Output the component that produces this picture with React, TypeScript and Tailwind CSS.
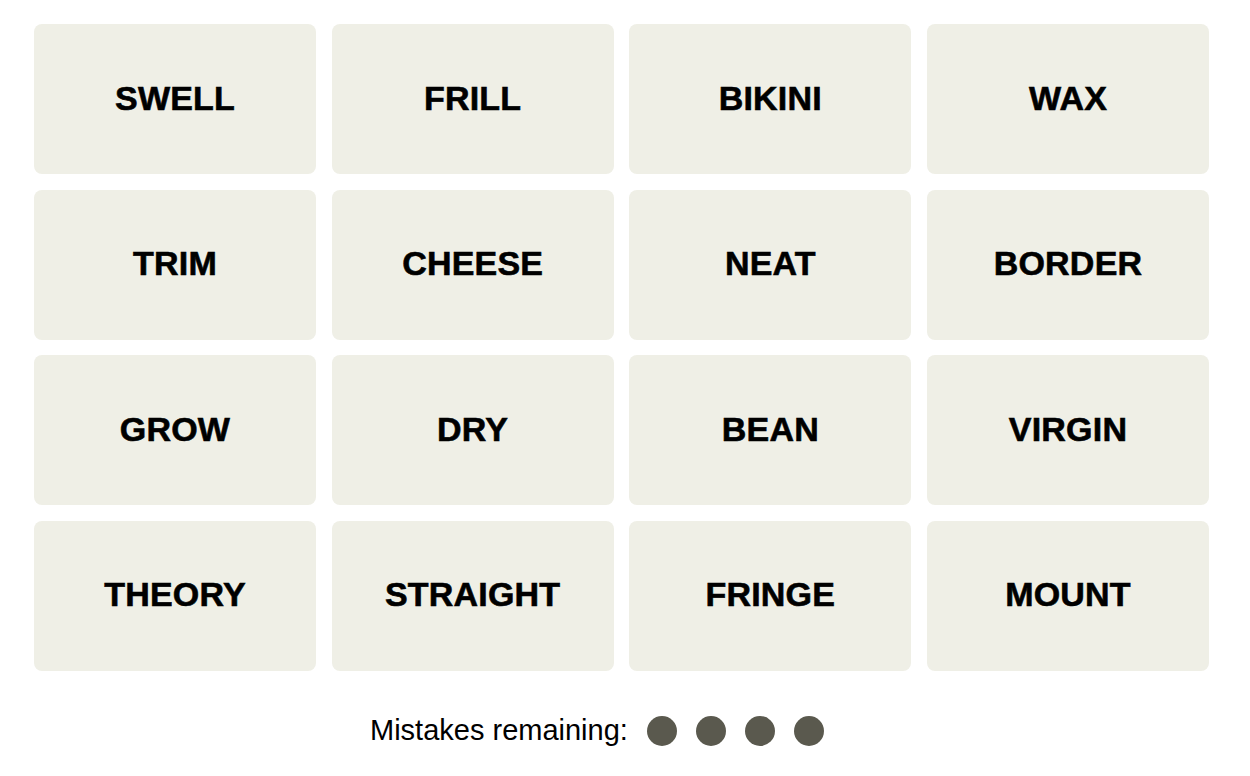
import React from 'react';

const words = [
  'SWELL', 'FRILL', 'BIKINI', 'WAX',
  'TRIM', 'CHEESE', 'NEAT', 'BORDER',
  'GROW', 'DRY', 'BEAN', 'VIRGIN',
  'THEORY', 'STRAIGHT', 'FRINGE', 'MOUNT',
];

const App: React.FC = () => {
  return (
    <div className="min-h-screen bg-white pt-[24px] font-['Liberation_Sans',Arial,sans-serif] text-black">
      <div className="ml-[34px] w-[1175px] grid grid-cols-4 gap-x-[15.67px] gap-y-[15.67px]">
        {words.map((w) => (
          <div
            key={w}
            className="h-[150px] rounded-[8px] bg-[#efefe6] flex items-center justify-center pb-[2px] text-[34px] font-bold tracking-[0.2px] [-webkit-text-stroke:0.6px_black]"
          >
            {w}
          </div>
        ))}
      </div>

      <div className="mt-[45px] pl-[370px] flex items-center">
        <span className="text-[29px] leading-none">Mistakes remaining:</span>
        <div className="ml-[19px] flex gap-[19px]">
          {[0, 1, 2, 3].map((i) => (
            <span key={i} className="w-[30px] h-[30px] rounded-full bg-[#5a594e]" />
          ))}
        </div>
      </div>
    </div>
  );
};

export default App;
